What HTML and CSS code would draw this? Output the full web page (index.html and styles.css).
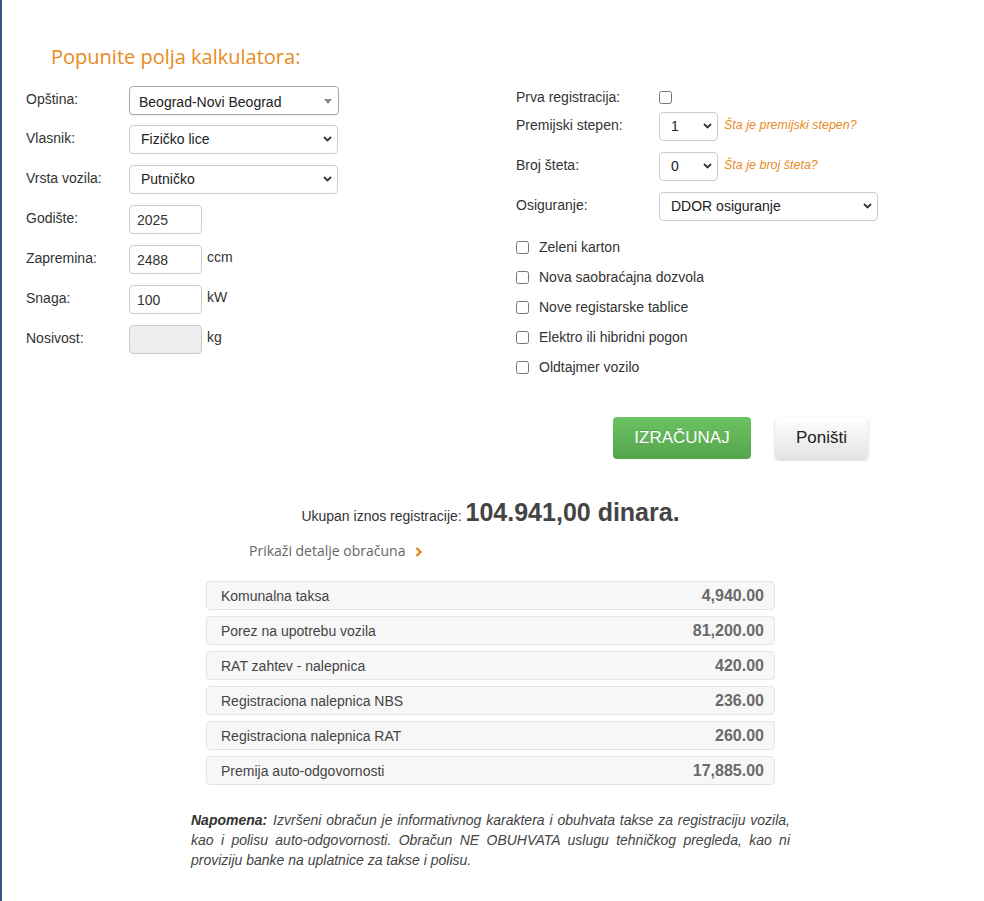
FILE: index.html
```html
<!DOCTYPE html>
<html lang="sr">
<head>
<meta charset="utf-8">
<title>Kalkulator registracije</title>
<link rel="stylesheet" href="styles.css">
</head>
<body>
<div class="page">
  <h2 class="title">Popunite polja kalkulatora:</h2>
  <div class="form">
    <div class="col-left">
      <div class="row">
        <span class="lbl">Opština:</span>
        <div class="fsel chosen w-wide"><span>Beograd-Novi Beograd</span>
          <svg width="8" height="5" viewBox="0 0 8 5"><path d="M0 0H8L4 5Z" fill="#8a8a8a"/></svg></div>
      </div>
      <div class="row">
        <span class="lbl">Vlasnik:</span>
        <div class="fsel w-wide"><span>Fizičko lice</span>
          <svg width="9" height="6" viewBox="0 0 9 6"><path d="M1 1L4.5 4.5L8 1" fill="none" stroke="#333" stroke-width="1.8"/></svg></div>
      </div>
      <div class="row">
        <span class="lbl">Vrsta vozila:</span>
        <div class="fsel w-wide"><span>Putničko</span>
          <svg width="9" height="6" viewBox="0 0 9 6"><path d="M1 1L4.5 4.5L8 1" fill="none" stroke="#333" stroke-width="1.8"/></svg></div>
      </div>
      <div class="row">
        <span class="lbl">Godište:</span>
        <div class="finput">2025</div>
      </div>
      <div class="row">
        <span class="lbl">Zapremina:</span>
        <div class="finput">2488</div>
        <span class="unit">ccm</span>
      </div>
      <div class="row">
        <span class="lbl">Snaga:</span>
        <div class="finput">100</div>
        <span class="unit">kW</span>
      </div>
      <div class="row">
        <span class="lbl">Nosivost:</span>
        <div class="finput disabled"></div>
        <span class="unit">kg</span>
      </div>
    </div>
    <div class="col-right">
      <div class="row row-check-first">
        <span class="lbl lbl-r">Prva registracija:</span>
        <input type="checkbox" class="cb">
      </div>
      <div class="row">
        <span class="lbl lbl-r">Premijski stepen:</span>
        <div class="fsel w-small"><span>1</span>
          <svg width="9" height="6" viewBox="0 0 9 6"><path d="M1 1L4.5 4.5L8 1" fill="none" stroke="#333" stroke-width="1.8"/></svg></div>
        <a class="help">Šta je premijski stepen?</a>
      </div>
      <div class="row">
        <span class="lbl lbl-r">Broj šteta:</span>
        <div class="fsel w-small"><span>0</span>
          <svg width="9" height="6" viewBox="0 0 9 6"><path d="M1 1L4.5 4.5L8 1" fill="none" stroke="#333" stroke-width="1.8"/></svg></div>
        <a class="help">Šta je broj šteta?</a>
      </div>
      <div class="row row-last">
        <span class="lbl lbl-r">Osiguranje:</span>
        <div class="fsel w-ins"><span>DDOR osiguranje</span>
          <svg width="9" height="6" viewBox="0 0 9 6"><path d="M1 1L4.5 4.5L8 1" fill="none" stroke="#333" stroke-width="1.8"/></svg></div>
      </div>
      <ul class="checks">
        <li><input type="checkbox" class="cb"><span>Zeleni karton</span></li>
        <li><input type="checkbox" class="cb"><span>Nova saobraćajna dozvola</span></li>
        <li><input type="checkbox" class="cb"><span>Nove registarske tablice</span></li>
        <li><input type="checkbox" class="cb"><span>Elektro ili hibridni pogon</span></li>
        <li><input type="checkbox" class="cb"><span>Oldtajmer vozilo</span></li>
      </ul>
      <div class="buttons">
        <button class="btn btn-green">IZRAČUNAJ</button>
        <button class="btn btn-light">Poništi</button>
      </div>
    </div>
  </div>

  <div class="lower">
    <p class="total"><span class="total-lbl">Ukupan iznos registracije: </span><strong class="total-val">104.941,00 dinara.</strong></p>
    <div class="results">
      <div class="details">Prikaži detalje obračuna
        <svg width="8" height="10" viewBox="0 0 8 10"><path d="M1.5 1L5.5 5L1.5 9" fill="none" stroke="#e6861a" stroke-width="2.4"/></svg>
      </div>
      <div class="items">
        <div class="item"><span>Komunalna taksa</span><b>4,940.00</b></div>
        <div class="item"><span>Porez na upotrebu vozila</span><b>81,200.00</b></div>
        <div class="item"><span>RAT zahtev - nalepnica</span><b>420.00</b></div>
        <div class="item"><span>Registraciona nalepnica NBS</span><b>236.00</b></div>
        <div class="item"><span>Registraciona nalepnica RAT</span><b>260.00</b></div>
        <div class="item"><span>Premija auto-odgovornosti</span><b>17,885.00</b></div>
      </div>
    </div>
    <p class="note"><b class="note-lead">Napomena:</b> Izvršeni obračun je informativnog karaktera i obuhvata takse za registraciju vozila, kao i polisu auto-odgovornosti. Obračun NE OBUHVATA uslugu tehničkog pregleda, kao ni proviziju banke na uplatnice za takse i polisu.</p>
  </div>
</div>
</body>
</html>
```

FILE: styles.css
```css
html, body {
  margin: 0;
  padding: 0;
  background: #fff;
}
body {
  border-left: 2px solid #3a5585;
  min-height: 901px;
  box-sizing: border-box;
  font-family: "Liberation Sans", Arial, sans-serif;
  font-size: 14px;
  color: #333;
}
.page {
  width: 977px;
  padding-top: 43px;
}
.title {
  margin: 0 0 15px 49px;
  font-family: "Open Sans", sans-serif;
  font-weight: 400;
  font-size: 20px;
  line-height: 28px;
  color: #e88a1d;
}
.form {
  display: flex;
  align-items: flex-start;
}
.col-left {
  width: 490px;
  padding-left: 24px;
}
.col-right {
  padding-top: 1px;
}
.row {
  display: flex;
  align-items: flex-start;
  height: 29px;
  margin-bottom: 11px;
}
.col-left .row:first-child {
  margin-bottom: 10px;
}
.lbl {
  width: 103px;
  padding-top: 5px;
  line-height: 16px;
  flex: none;
}
.lbl-r {
  width: 143px;
}
.fsel {
  box-sizing: border-box;
  height: 29px;
  border: 1px solid #ccc;
  border-radius: 4px;
  background: #fff;
  display: flex;
  align-items: center;
  justify-content: space-between;
  padding: 0 5px 1px 11px;
  color: #222;
  flex: none;
}
.fsel.chosen {
  width: 210px;
  border-color: #a9a9a9;
  padding: 2px 6px 0 9px;
  box-shadow: 0 1px 1px rgba(0,0,0,.06);
}
.w-wide { width: 209px; }
.w-small { width: 59px; }
.w-ins { width: 219px; }
.finput {
  box-sizing: border-box;
  width: 73px;
  height: 29px;
  border: 1px solid #ccc;
  border-radius: 4px;
  background: #fff;
  padding: 1px 7px 0;
  line-height: 26px;
  color: #333;
  flex: none;
}
.finput.disabled {
  background: #eee;
}
.unit {
  margin-left: 5px;
  padding-top: 4px;
  line-height: 16px;
}
.row-check-first {
  height: 20px;
  margin-bottom: 5px;
  align-items: center;
}
.row-check-first .lbl {
  padding-top: 0;
}
.cb {
  width: 13px;
  height: 13px;
  margin: 0;
  flex: none;
}
.help {
  margin-left: 6px;
  padding-top: 5px;
  line-height: 16px;
  font-size: 12.5px;
  font-style: italic;
  color: #e88a1d;
}
.row-last {
  margin-bottom: 16px;
}
.checks {
  list-style: none;
  margin: 0;
  padding: 0;
}
.checks li {
  display: flex;
  align-items: center;
  height: 20px;
  margin-bottom: 10px;
}
.checks li span {
  margin-left: 10px;
}
.checks li:last-child {
  margin-bottom: 40px;
}
.buttons {
  display: flex;
  gap: 24px;
  margin-left: 97px;
}
.btn {
  height: 42px;
  border: 0;
  border-radius: 4px;
  font-family: "Liberation Sans", Arial, sans-serif;
  font-size: 17px;
  padding: 0;
  cursor: pointer;
}
.btn-green {
  width: 138px;
  color: #fff;
  background: linear-gradient(to bottom, #6cc363 0%, #55a44a 100%);
  text-shadow: 0 -1px 0 rgba(0,0,0,.12);
}
.btn-light {
  width: 93px;
  color: #222;
  background: linear-gradient(to bottom, #ffffff 0%, #e3e3e3 100%);
  box-shadow: 0 1px 3px rgba(0,0,0,.22);
}
.lower {
  padding-top: 38px;
}
.total {
  margin: 0;
  text-align: center;
  line-height: 30px;
  color: #333;
}
.total-val {
  font-size: 25px;
  color: #444;
}
.results {
  width: 569px;
  margin: 10px auto 0;
}
.details {
  display: flex;
  align-items: center;
  gap: 10px;
  padding-left: 43px;
  font-family: "Open Sans", sans-serif;
  font-size: 14px;
  line-height: 20px;
  color: #666;
  margin-bottom: 20px;
}
.details svg {
  margin-top: 1px;
}
.items {
  display: flex;
  flex-direction: column;
  gap: 6px;
}
.item {
  box-sizing: border-box;
  height: 29px;
  display: flex;
  align-items: center;
  justify-content: space-between;
  padding: 0 10px 0 14px;
  background: #f7f7f7;
  border: 1px solid #e4e4e4;
  border-radius: 4px;
  color: #444;
}
.item b {
  font-size: 16px;
  color: #6a6a6a;
}
.note {
  width: 599px;
  margin: 25px auto 0;
  font-style: italic;
  line-height: 20px;
  text-align: justify;
  color: #444;
}
.note-lead {
  color: #333;
  margin-right: 1px;
}
```
